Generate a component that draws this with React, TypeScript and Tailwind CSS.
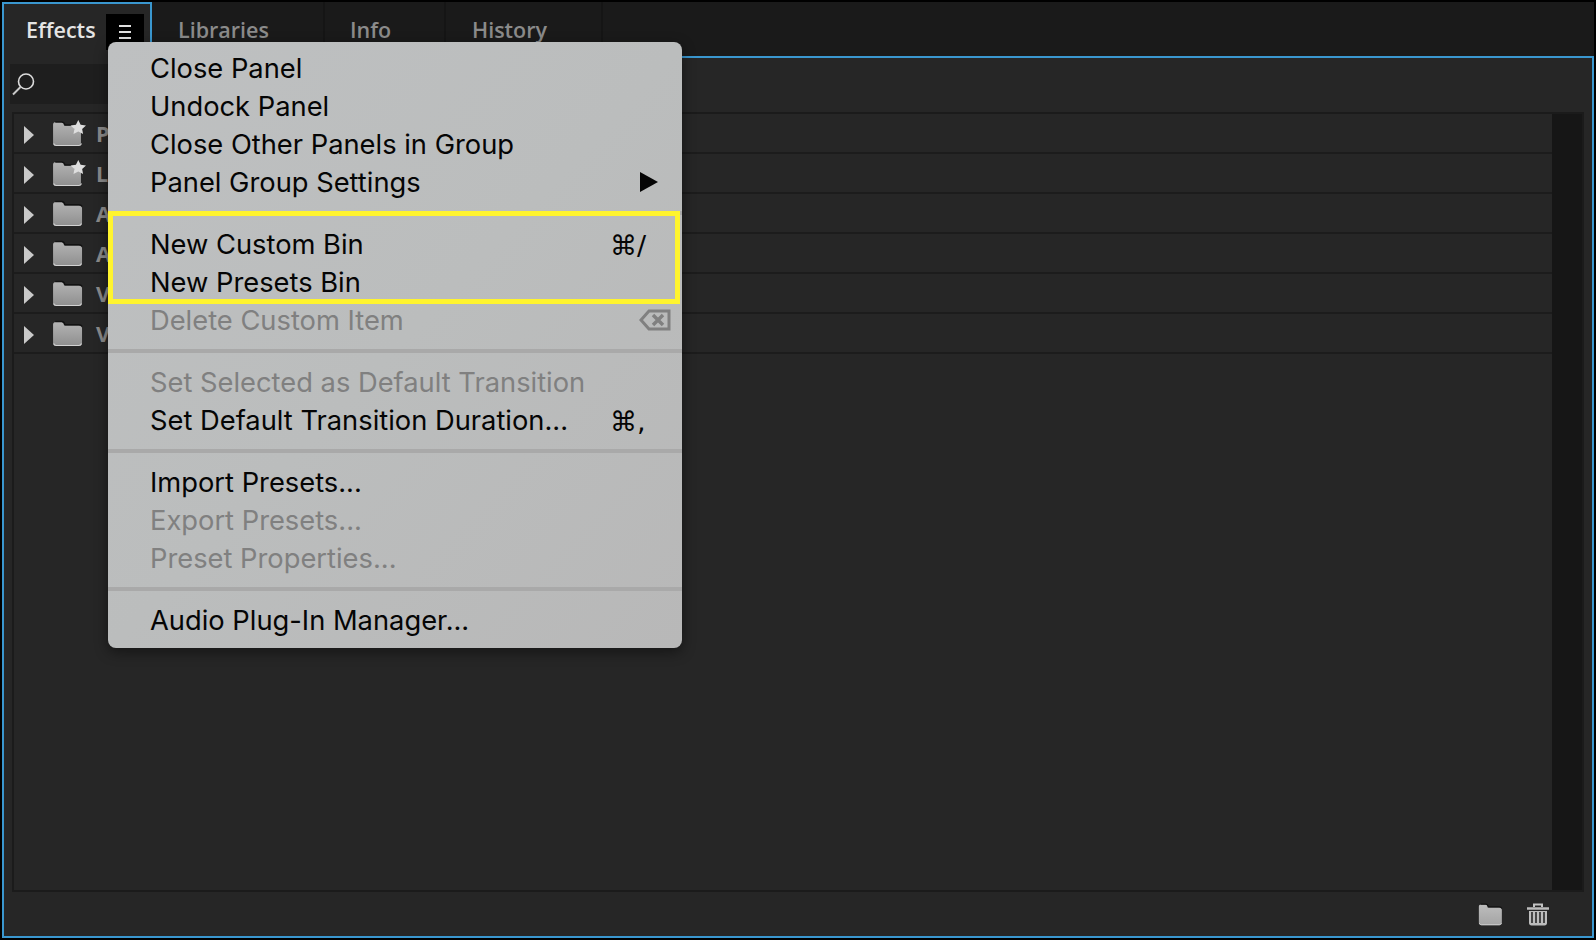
import { Fragment } from 'react'

const UI_FONT = "font-['Inter','Liberation_Sans',sans-serif]"

const bins = [
  { label: 'P', star: true },
  { label: 'L', star: true },
  { label: 'A', star: false },
  { label: 'A', star: false },
  { label: 'V', star: false },
  { label: 'V', star: false },
]

type Item = { label: string; disabled?: boolean; shortcut?: string; submenu?: boolean; del?: boolean }

const menuGroups: Item[][] = [
  [
    { label: 'Close Panel' },
    { label: 'Undock Panel' },
    { label: 'Close Other Panels in Group' },
    { label: 'Panel Group Settings', submenu: true },
  ],
  [
    { label: 'New Custom Bin', shortcut: '⌘/' },
    { label: 'New Presets Bin' },
    { label: 'Delete Custom Item', disabled: true, del: true },
  ],
  [
    { label: 'Set Selected as Default Transition', disabled: true },
    { label: 'Set Default Transition Duration...', shortcut: '⌘,' },
  ],
  [
    { label: 'Import Presets...' },
    { label: 'Export Presets...', disabled: true },
    { label: 'Preset Properties...', disabled: true },
  ],
  [{ label: 'Audio Plug-In Manager...' }],
]

function FolderIcon({ id, star, className, light }: { id: string; star?: boolean; className?: string; light?: boolean }) {
  return (
    <svg width="34" height="28" viewBox="0 0 31.7 28" preserveAspectRatio="none" className={className}>
      <defs>
        <linearGradient id={id} x1="0" y1="0" x2="0" y2="1">
          <stop offset="0" stopColor={light ? '#bdbdbd' : '#b4b4b4'} />
          <stop offset="1" stopColor={light ? '#a4a4a4' : '#8e8e8e'} />
        </linearGradient>
      </defs>
      {star ? (
        <>
          <path d="M1 5.500C1 4 2 3 3.500 3H9c1.500 0 2.500 1 3 3l.3.500H19l3.500 6 4.500-2.500V24c0 2-1 3-3 3H4c-2 0-3-1-3-3Z" fill={`url(#${id})`} />
          <path d="M3 3h6c1.500 0 2.500 1 3 3h7" fill="none" stroke="#141414" strokeWidth="1.500" />
          <path d="M24.500 1l2.200 4.700 5 .7-3.600 3.500.9 5-4.500-2.400-4.500 2.400.9-5-3.600-3.500 5-.7Z" fill="#dedede" />
        </>
      ) : (
        <>
          <path d="M1 5.500C1 4 2 3 3.500 3H9c1.500 0 2.500 1 3 3l.3.500H25c2 0 3 1 3 3V24c0 2-1 3-3 3H4c-2 0-3-1-3-3Z" fill={`url(#${id})`} />
          <path d="M3 2.500h6c1.500 0 2.500 1 3 3.300h13c1.500 0 2.500.7 3 1.700" fill="none" stroke="#121212" strokeWidth="1.500" />
        </>
      )}
      <path d="M1.500 24.500C2 26 3 26.500 4 26.500h21c1 0 2-.5 2.500-2" fill="none" stroke="#d2d2d2" strokeWidth="1" />
    </svg>
  )
}

function TrashIcon() {
  return (
    <svg width="24" height="24" viewBox="0 0 24 24">
      <path d="M8 5V2.500h8V5" fill="none" stroke="#c4c4c4" strokeWidth="2" />
      <path d="M1 6.500h22" stroke="#bdbdbd" strokeWidth="2.500" />
      <path d="M3 9h18v12c0 1.500-1 2.500-2.500 2.500h-13C4 23.500 3 22.500 3 21Z" fill="#bdbdbd" />
      <path d="M7 10v11M11 10v11M15 10v11M19 10v11" stroke="#2a2a2a" strokeWidth="1.600" transform="translate(-1 0)" />
    </svg>
  )
}

function MenuRow({ item }: { item: Item }) {
  return (
    <div className={`flex h-[38px] items-center justify-between pl-[42px] ${item.disabled ? 'text-[#808080]' : 'text-[#050505]'}`}>
      <span className="translate-y-[1px]">{item.label}</span>
      {item.shortcut && <span className="w-[72px] translate-y-[1px] font-['DejaVu_Sans',sans-serif] text-[27px]">{item.shortcut}</span>}
      {item.submenu && (
        <svg width="18" height="20" viewBox="0 0 18 20" className="mr-[24px]">
          <path d="M0 0l18 10L0 20Z" fill="#050505" />
        </svg>
      )}
      {item.del && (
        <svg width="32" height="22" viewBox="0 0 32 22" className="mr-[11px]">
          <path d="M10 2h20v18H10L2 11Z" fill="none" stroke="#808080" strokeWidth="3" />
          <path d="M14 6l10 10M24 6L14 16" stroke="#808080" strokeWidth="3.500" />
        </svg>
      )}
    </div>
  )
}

function PanelMenu() {
  return (
    <div className={`absolute left-[108px] top-[42px] z-20 h-[606px] w-[574px] rounded-[8px] bg-gradient-to-br from-[#bec0c1] via-[#bbbdbd] to-[#b8b8b8] pt-[7px] text-[27.3px] leading-none shadow-[0_4px_14px_rgba(0,0,0,0.45)] ${UI_FONT}`}>
      {menuGroups.map((group, i) => (
        <Fragment key={i}>
          {i > 0 && <div className="my-[10px] h-[4px] bg-[#a9a9a9]" />}
          {group.map(item => <MenuRow key={item.label} item={item} />)}
        </Fragment>
      ))}
      <div className="absolute left-0 top-[169px] h-[93px] w-[572px] border-[5px] border-[#fff42e]" />
    </div>
  )
}

export default function App() {
  return (
    <div className="relative flex h-[940px] w-[1596px] flex-col overflow-hidden bg-black p-[2px] font-['Open_Sans','Liberation_Sans',sans-serif]">
      {/* tab strip */}
      <div className="relative z-10 flex h-[54px] shrink-0 bg-[#1a1a1a] text-[21.5px] font-semibold text-[#8b8b8b]">
        <div className="-mb-[4px] flex w-[150px] items-start border-2 border-b-0 border-[#3a97cf] bg-[#262626] pl-[22px] pt-[10px] text-[#e4e4e4]">
          Effects
          <div className="absolute left-[104px] top-[12px] flex h-[36px] w-[38px] flex-col items-center justify-center gap-[4px] bg-black">
            <span className="h-[2px] w-[12px] bg-[#e0e0e0]" />
            <span className="h-[2px] w-[12px] bg-[#e0e0e0]" />
            <span className="h-[2px] w-[12px] bg-[#e0e0e0]" />
          </div>
        </div>
        <div className="flex w-[173px] border-r-2 border-[#151515] pl-[26px] pt-[12px]">Libraries</div>
        <div className="flex w-[121px] border-r-2 border-[#151515] pl-[25px] pt-[12px]">Info</div>
        <div className="flex w-[157px] border-r-2 border-[#151515] pl-[26px] pt-[12px]">History</div>
      </div>

      {/* panel body */}
      <div className="flex min-h-0 flex-1 flex-col border-2 border-[#3a97cf] bg-[#262626]">
        <div className="mx-[6px] mt-[6px] flex h-[40px] w-[400px] shrink-0 items-center bg-[#1e1e1e]">
          <svg width="26" height="26" viewBox="0 0 26 26">
            <circle cx="16" cy="10.500" r="7.500" fill="none" stroke="#dcdcdc" strokeWidth="1.600" />
            <path d="M10.500 16L3 23.500" stroke="#c8c8c8" strokeWidth="2" />
          </svg>
        </div>
        <div className="mx-[8px] mt-[8px] flex min-h-0 flex-1 border-2 border-[#1b1b1b]">
          <div className="flex-1">
            {bins.map((bin, i) => (
              <div key={i} className="flex h-[40px] items-center border-b-2 border-[#1c1c1c] pl-[10px] text-[21.5px] font-bold text-[#8a8a8a]">
                <svg width="10" height="18" viewBox="0 0 10 18" className="mt-[3px] shrink-0">
                  <path d="M0 0l10 9-10 9Z" fill="#c9c9c9" />
                </svg>
                <FolderIcon id={`bin-${i}`} star={bin.star} className="ml-[18px] shrink-0" />
                <span className="ml-[10px] mt-[3px]">{bin.label}</span>
              </div>
            ))}
          </div>
          <div className="w-[30px] bg-[#161616]" />
        </div>
        <div className="flex h-[44px] shrink-0 items-center justify-end gap-[21px] pr-[42px]">
          <FolderIcon id="footer-folder" light className="h-[24px] w-[27px]" />
          <TrashIcon />
        </div>
      </div>

      <PanelMenu />
    </div>
  )
}
